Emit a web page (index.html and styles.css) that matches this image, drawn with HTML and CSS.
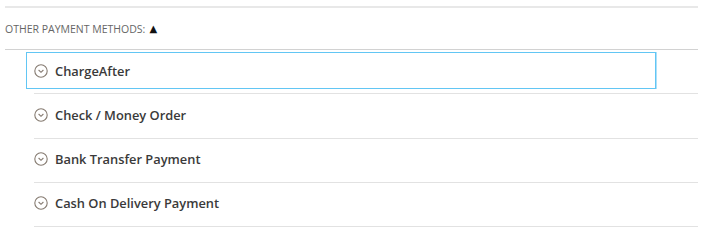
FILE: index.html
```html
<!DOCTYPE html>
<html>
<head>
<meta charset="utf-8">
<link rel="stylesheet" href="styles.css">
</head>
<body>
<div class="wrap">
  <div class="header"><span class="header-text">Other payment methods:</span><span class="caret">&#9650;</span></div>
  <div class="methods">
    <div class="method">
      <div class="title focused">
        <svg class="icon" viewBox="0 0 14 14" width="14" height="14"><circle cx="7" cy="7" r="6.2" fill="none" stroke="#857a70" stroke-width="1.1"/><path d="M4.6 6 L7 8.3 L9.4 6" fill="none" stroke="#857a70" stroke-width="1.1"/></svg>
        <span>ChargeAfter</span>
      </div>
    </div>
    <div class="method">
      <div class="title">
        <svg class="icon" viewBox="0 0 14 14" width="14" height="14"><circle cx="7" cy="7" r="6.2" fill="none" stroke="#857a70" stroke-width="1.1"/><path d="M4.6 6 L7 8.3 L9.4 6" fill="none" stroke="#857a70" stroke-width="1.1"/></svg>
        <span>Check / Money Order</span>
      </div>
    </div>
    <div class="method">
      <div class="title">
        <svg class="icon" viewBox="0 0 14 14" width="14" height="14"><circle cx="7" cy="7" r="6.2" fill="none" stroke="#857a70" stroke-width="1.1"/><path d="M4.6 6 L7 8.3 L9.4 6" fill="none" stroke="#857a70" stroke-width="1.1"/></svg>
        <span>Bank Transfer Payment</span>
      </div>
    </div>
    <div class="method">
      <div class="title">
        <svg class="icon" viewBox="0 0 14 14" width="14" height="14"><circle cx="7" cy="7" r="6.2" fill="none" stroke="#857a70" stroke-width="1.1"/><path d="M4.6 6 L7 8.3 L9.4 6" fill="none" stroke="#857a70" stroke-width="1.1"/></svg>
        <span>Cash On Delivery Payment</span>
      </div>
    </div>
  </div>
</div>
</body>
</html>
```
FILE: styles.css
```css
html, body {
  margin: 0;
  padding: 0;
  background: #ffffff;
}
body {
  font-family: "Open Sans", "Liberation Sans", sans-serif;
}
.wrap {
  margin: 6px 4px 0 5px;
  border-top: 2px solid #e8e8e8;
}
.header {
  height: 41px;
  border-bottom: 1px solid #d2d2d2;
  display: flex;
  align-items: center;
  gap: 4px;
  font-size: 10.5px;
  color: #666666;
}
.header-text {
  text-transform: uppercase;
}
.caret {
  font-family: "DejaVu Sans", sans-serif;
  font-size: 10px;
  color: #111;
  line-height: 1;
}
.methods {
  margin-left: 29px;
}
.method {
  height: 41.3px;
  border-bottom: 1px solid #e2e2e2;
  padding-top: 2px;
}
.title {
  display: flex;
  align-items: center;
  gap: 7px;
  height: 37px;
  box-sizing: border-box;
  font-size: 12.85px;
  font-weight: 600;
  color: #3a3a3a;
  border: 1px solid transparent;
  margin-left: -8px;
  padding-left: 7px;
  width: 630px;
}
.title.focused {
  border-color: #62c6f4;
  box-shadow: 1px 0 0 #aee0f9;
}
.icon {
  display: block;
  flex: none;
}
```
